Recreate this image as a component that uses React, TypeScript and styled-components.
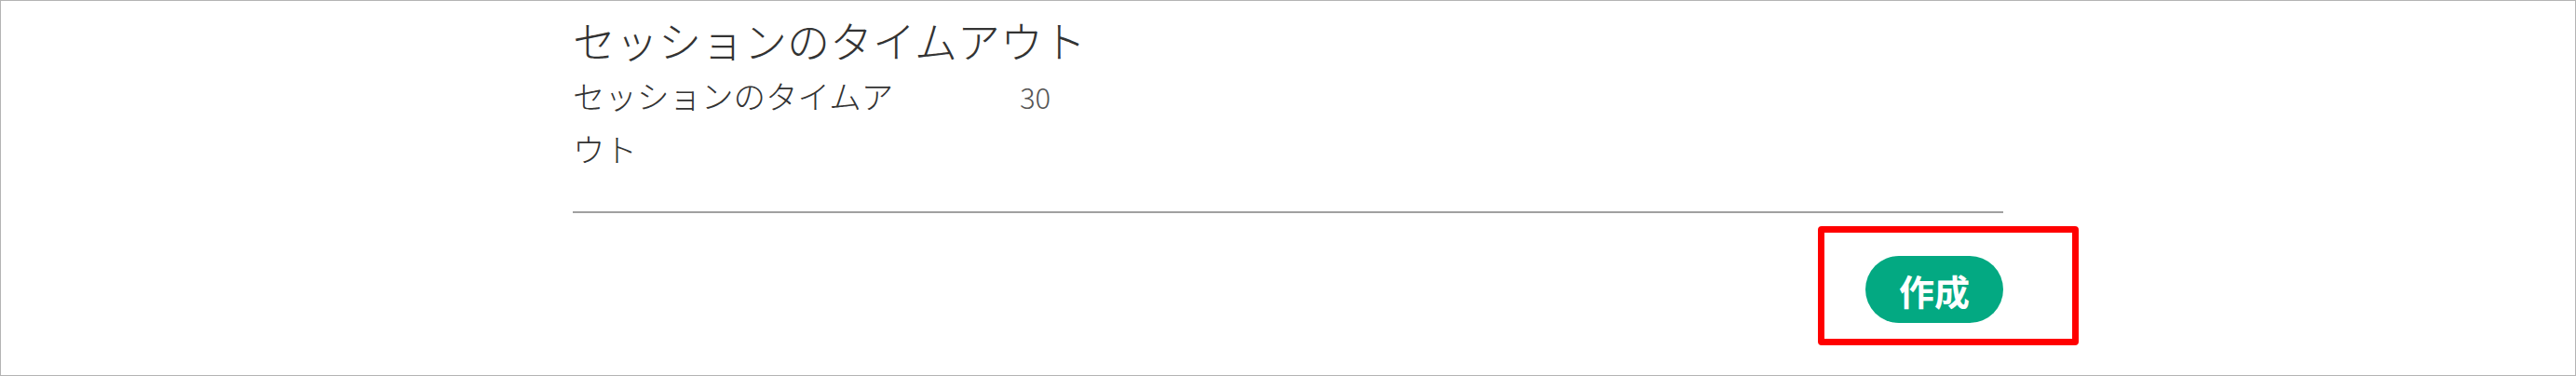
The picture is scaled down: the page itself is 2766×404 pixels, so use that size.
import styled, { createGlobalStyle } from 'styled-components';

const GlobalStyle = createGlobalStyle`
  html, body {
    margin: 0;
    padding: 0;
    background: #fff;
  }
  body {
    font-family: "Noto Sans CJK JP", "Noto Sans", sans-serif;
  }
`;

const Frame = styled.div`
  box-sizing: border-box;
  width: 100vw;
  height: 100vh;
  border: 1px solid #b4b4b4;
  overflow: hidden;
`;

const Panel = styled.section`
  width: 1536px;
  margin-left: 614px;
  display: flex;
  flex-direction: column;
`;

const Title = styled.h2`
  margin: 10px 0 0;
  font-size: 46px;
  line-height: 63px;
  font-weight: 300;
  color: #333;
`;

const Row = styled.div`
  display: grid;
  grid-template-columns: 360px 1fr;
  column-gap: 120px;
  align-items: baseline;
`;

const Label = styled.div`
  font-size: 34.5px;
  line-height: 57px;
  font-weight: 300;
  color: #333;
`;

const Value = styled.div`
  font-size: 31px;
  font-weight: 300;
  color: #555;
`;

const Divider = styled.hr`
  margin: 39px 0 0;
  border: none;
  height: 2px;
  background: #a0a0a0;
`;

const Footer = styled.div`
  display: flex;
  justify-content: flex-end;
  padding-top: 46px;
`;

const ButtonWrap = styled.div`
  position: relative;
`;

const CreateButton = styled.button`
  width: 148px;
  height: 72px;
  border: none;
  border-radius: 36px;
  background: #03a982;
  color: #fff;
  font-family: "Noto Sans CJK JP", sans-serif;
  font-size: 38px;
  font-weight: 700;
  cursor: pointer;
  padding: 0;
`;

const Highlight = styled.div`
  position: absolute;
  left: -51px;
  top: -32px;
  width: 280px;
  height: 128px;
  box-sizing: border-box;
  border: 7px solid #ff0000;
  border-radius: 4px;
  pointer-events: none;
`;

export default function App() {
  return (
    <>
      <GlobalStyle />
      <Frame>
        <Panel>
          <Title>セッションのタイムアウト</Title>
          <Row>
            <Label>セッションのタイムアウト</Label>
            <Value>30</Value>
          </Row>
          <Divider />
          <Footer>
            <ButtonWrap>
              <CreateButton>作成</CreateButton>
              <Highlight />
            </ButtonWrap>
          </Footer>
        </Panel>
      </Frame>
    </>
  );
}
